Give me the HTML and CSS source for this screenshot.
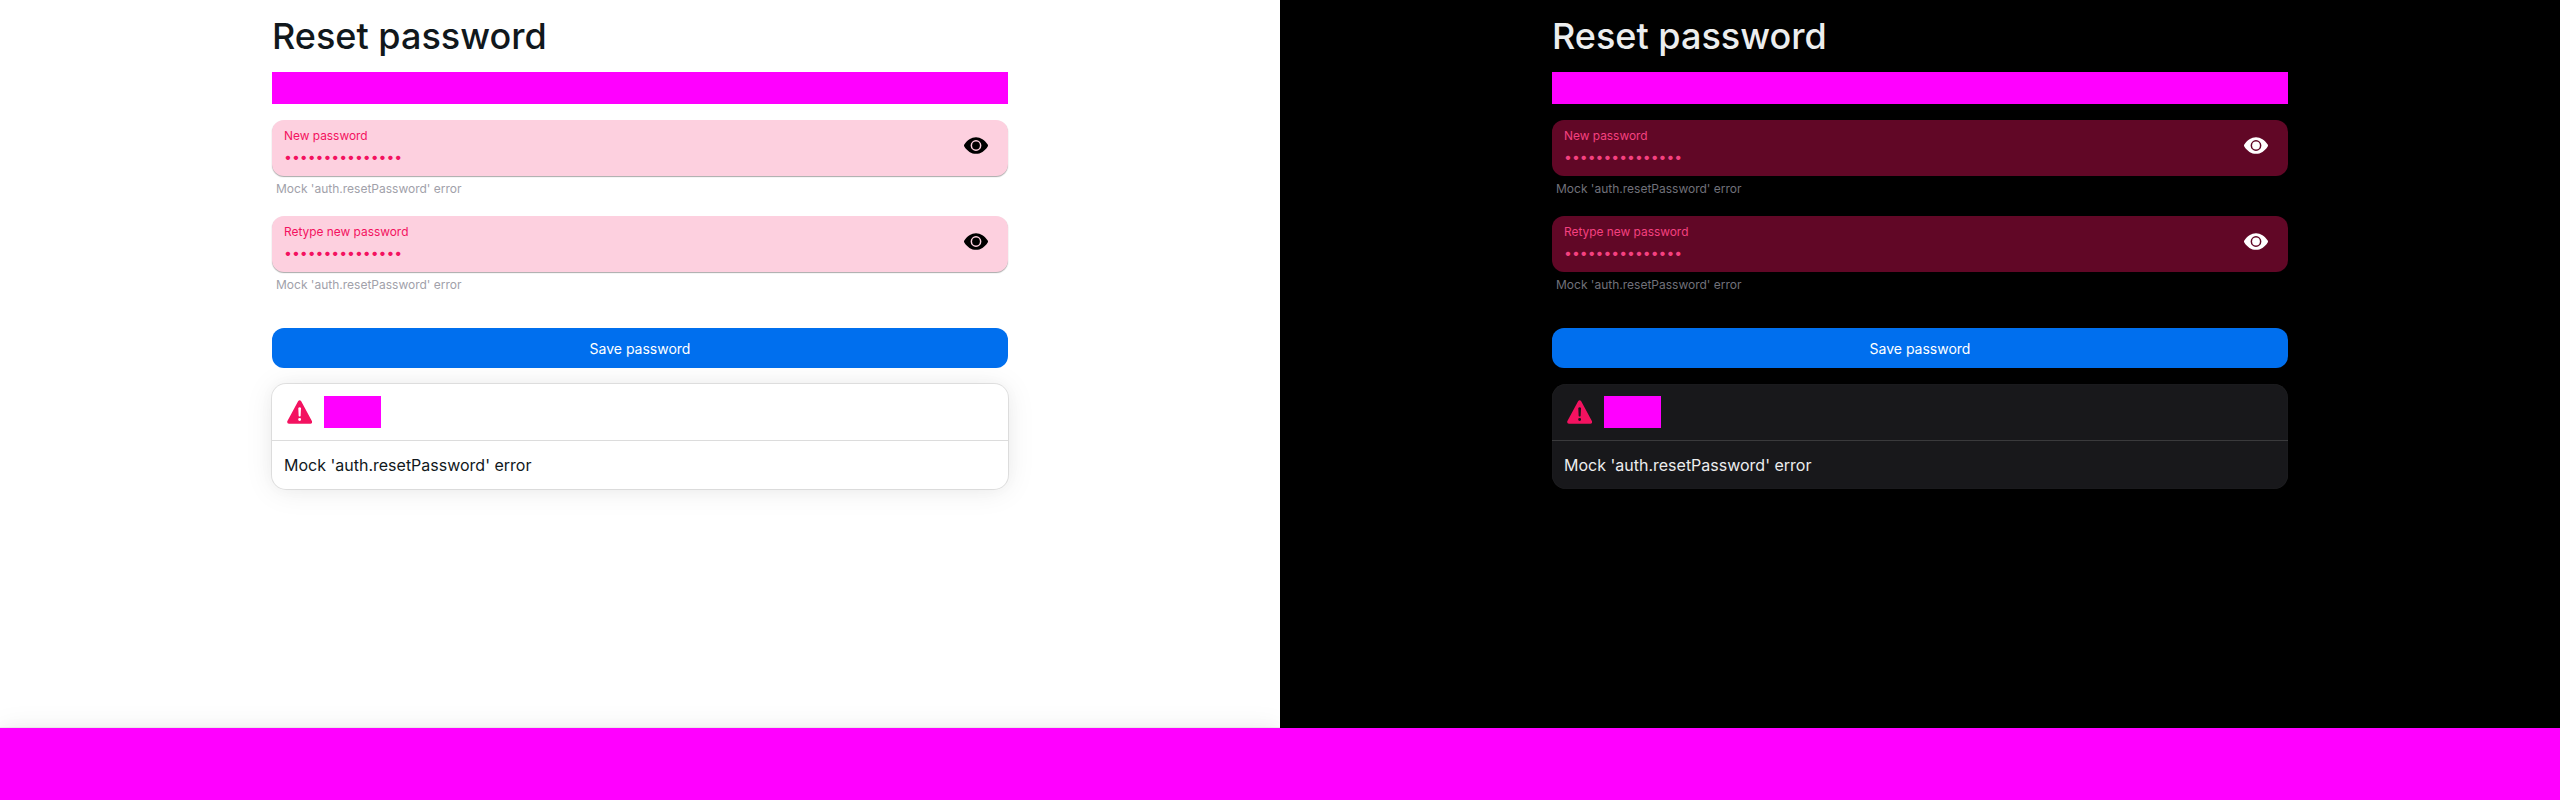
FILE: index.html
```
<!DOCTYPE html>
<html lang="en">
<head>
<meta charset="utf-8">
<title>Reset password</title>
<link rel="stylesheet" href="styles.css">
</head>
<body>
<svg class="sprite" aria-hidden="true">
  <symbol id="eye" viewBox="0 0 24 17"><path fill-rule="evenodd" d="M.3 7.6C3.2 3 7.4.2 12 .2s8.800 2.800 11.700 7.400q.6.900 0 1.800C20.800 14 16.600 16.800 12 16.800S3.200 14 .3 9.400q-.6-.9 0-1.800zM12 3.100a5.400 5.400 0 1 0 0 10.800 5.400 5.400 0 0 0 0-10.800z"/><circle cx="12" cy="8.500" r="3.900"/></symbol>
  <symbol id="warning" viewBox="0 0 26 24"><path fill-rule="evenodd" d="M11.400.9Q13-.9 14.600.9L25.700 21.400Q26.300 24 24 24H2Q-.3 24 .3 21.400ZM11.600 8L12 16.200Q13 17.300 14 16.200L14.400 8Q13 6 11.600 8ZM13 18.200a1.500 1.500 0 1 0 0 3 1.500 1.500 0 0 0 0-3z"/></symbol>
</svg>
<div class="themes">
  <section class="theme light">
    <main class="content">
      <h1 class="title">Reset password</h1>
      <div class="mask mask-text"></div>
      <form class="form">
        <div class="field">
          <label class="control"><span class="entry"><span class="label">New password</span><input class="input" type="password" value="newpassword1234"></span><svg class="eye"><use href="#eye"/></svg></label>
          <p class="help">Mock 'auth.resetPassword' error</p>
        </div>
        <div class="field">
          <label class="control"><span class="entry"><span class="label">Retype new password</span><input class="input" type="password" value="newpassword1234"></span><svg class="eye"><use href="#eye"/></svg></label>
          <p class="help">Mock 'auth.resetPassword' error</p>
        </div>
        <button class="button" type="button">Save password</button>
      </form>
      <div class="card">
        <div class="card-header"><svg class="warning"><use href="#warning"/></svg><div class="mask mask-heading"></div></div>
        <div class="card-body">Mock 'auth.resetPassword' error</div>
      </div>
    </main>
    <footer class="mask footer"></footer>
  </section>
  <section class="theme dark">
    <main class="content">
      <h1 class="title">Reset password</h1>
      <div class="mask mask-text"></div>
      <form class="form">
        <div class="field">
          <label class="control"><span class="entry"><span class="label">New password</span><input class="input" type="password" value="newpassword1234"></span><svg class="eye"><use href="#eye"/></svg></label>
          <p class="help">Mock 'auth.resetPassword' error</p>
        </div>
        <div class="field">
          <label class="control"><span class="entry"><span class="label">Retype new password</span><input class="input" type="password" value="newpassword1234"></span><svg class="eye"><use href="#eye"/></svg></label>
          <p class="help">Mock 'auth.resetPassword' error</p>
        </div>
        <button class="button" type="button">Save password</button>
      </form>
      <div class="card">
        <div class="card-header"><svg class="warning"><use href="#warning"/></svg><div class="mask mask-heading"></div></div>
        <div class="card-body">Mock 'auth.resetPassword' error</div>
      </div>
    </main>
    <footer class="mask footer"></footer>
  </section>
</div>
</body>
</html>
```
FILE: styles.css
```
* { box-sizing: border-box; margin: 0; }
body { font-family: Inter, sans-serif; font-size: 16px; line-height: 24px; -webkit-font-smoothing: antialiased; }
.sprite { display: none; }
.themes { display: grid; grid-template-columns: 1fr 1fr; height: 800px; }
.theme { display: flex; flex-direction: column; color: var(--text); background: var(--page); overflow: hidden; }
.light {
  --page: #fff; --text: #11181c; --field: #fdd0df; --danger: #f31260; --muted: #a1a1aa;
  --icon: #000; --surface: #fff; --line: rgba(17, 17, 17, .15);
  --field-shadow: 0 1px 1px rgba(0, 0, 0, .3), 0 1px 2px rgba(0, 0, 0, .06);
  --card-shadow: 0 0 15px rgba(0, 0, 0, .03), 0 2px 30px rgba(0, 0, 0, .08), 0 0 0 1px rgba(0, 0, 0, .09);
}
.dark {
  --page: #000; --text: #ecedee; --field: #610726; --danger: #f54180; --muted: #71717a;
  --icon: #fff; --surface: #18181b; --line: rgba(255, 255, 255, .15);
  --field-shadow: none;
  --card-shadow: inset 0 0 1px rgba(255, 255, 255, .15);
}
.content { display: flex; flex-direction: column; flex: 1; gap: 16px; width: 736px; margin: 0 auto; padding-top: 16px; }
.title { font-size: 36px; font-weight: 500; line-height: 40px; }
.mask { background: #f0f; }
.mask-text { height: 32px; }
.form { display: flex; flex-direction: column; }
.field { height: 96px; }
.control { display: flex; align-items: center; justify-content: space-between; height: 56px; padding: 8px 20px 8px 12px; border-radius: 12px; background: var(--field); color: var(--danger); box-shadow: var(--field-shadow); }
.entry { display: flex; flex-direction: column; }
.label { font-size: 11.9px; line-height: 16px; }
.input { width: 400px; height: 20px; margin: 3px 0 1px; padding: 0; border: 0; outline: 0; background: transparent; color: inherit; font: 14px/20px Inter, sans-serif; }
.eye { width: 24px; height: 17px; margin-bottom: 4.4px; fill: var(--icon); }
.help { padding: 5px 4px 4px; font-size: 12px; line-height: 16px; color: var(--muted); }
.button { height: 40px; margin-top: 16px; padding: 2px 0 0; border: 0; border-radius: 12px; background: #006fee; color: #fff; font: 14px/20px Inter, sans-serif; }
.card { border-radius: 14px; background: var(--surface); box-shadow: var(--card-shadow); }
.card-header { display: flex; align-items: center; gap: 12px; height: 57px; padding: 12px 14.7px; border-bottom: 1px solid var(--line); }
.warning { width: 25.3px; height: 24px; fill: #f31260; }
.mask-heading { width: 57px; height: 32px; }
.card-body { padding: 12px; }
.footer { height: 72px; box-shadow: 0 0 15px rgba(0, 0, 0, .03), 0 2px 30px rgba(0, 0, 0, .08), 0 0 1px rgba(0, 0, 0, .3); }
```
